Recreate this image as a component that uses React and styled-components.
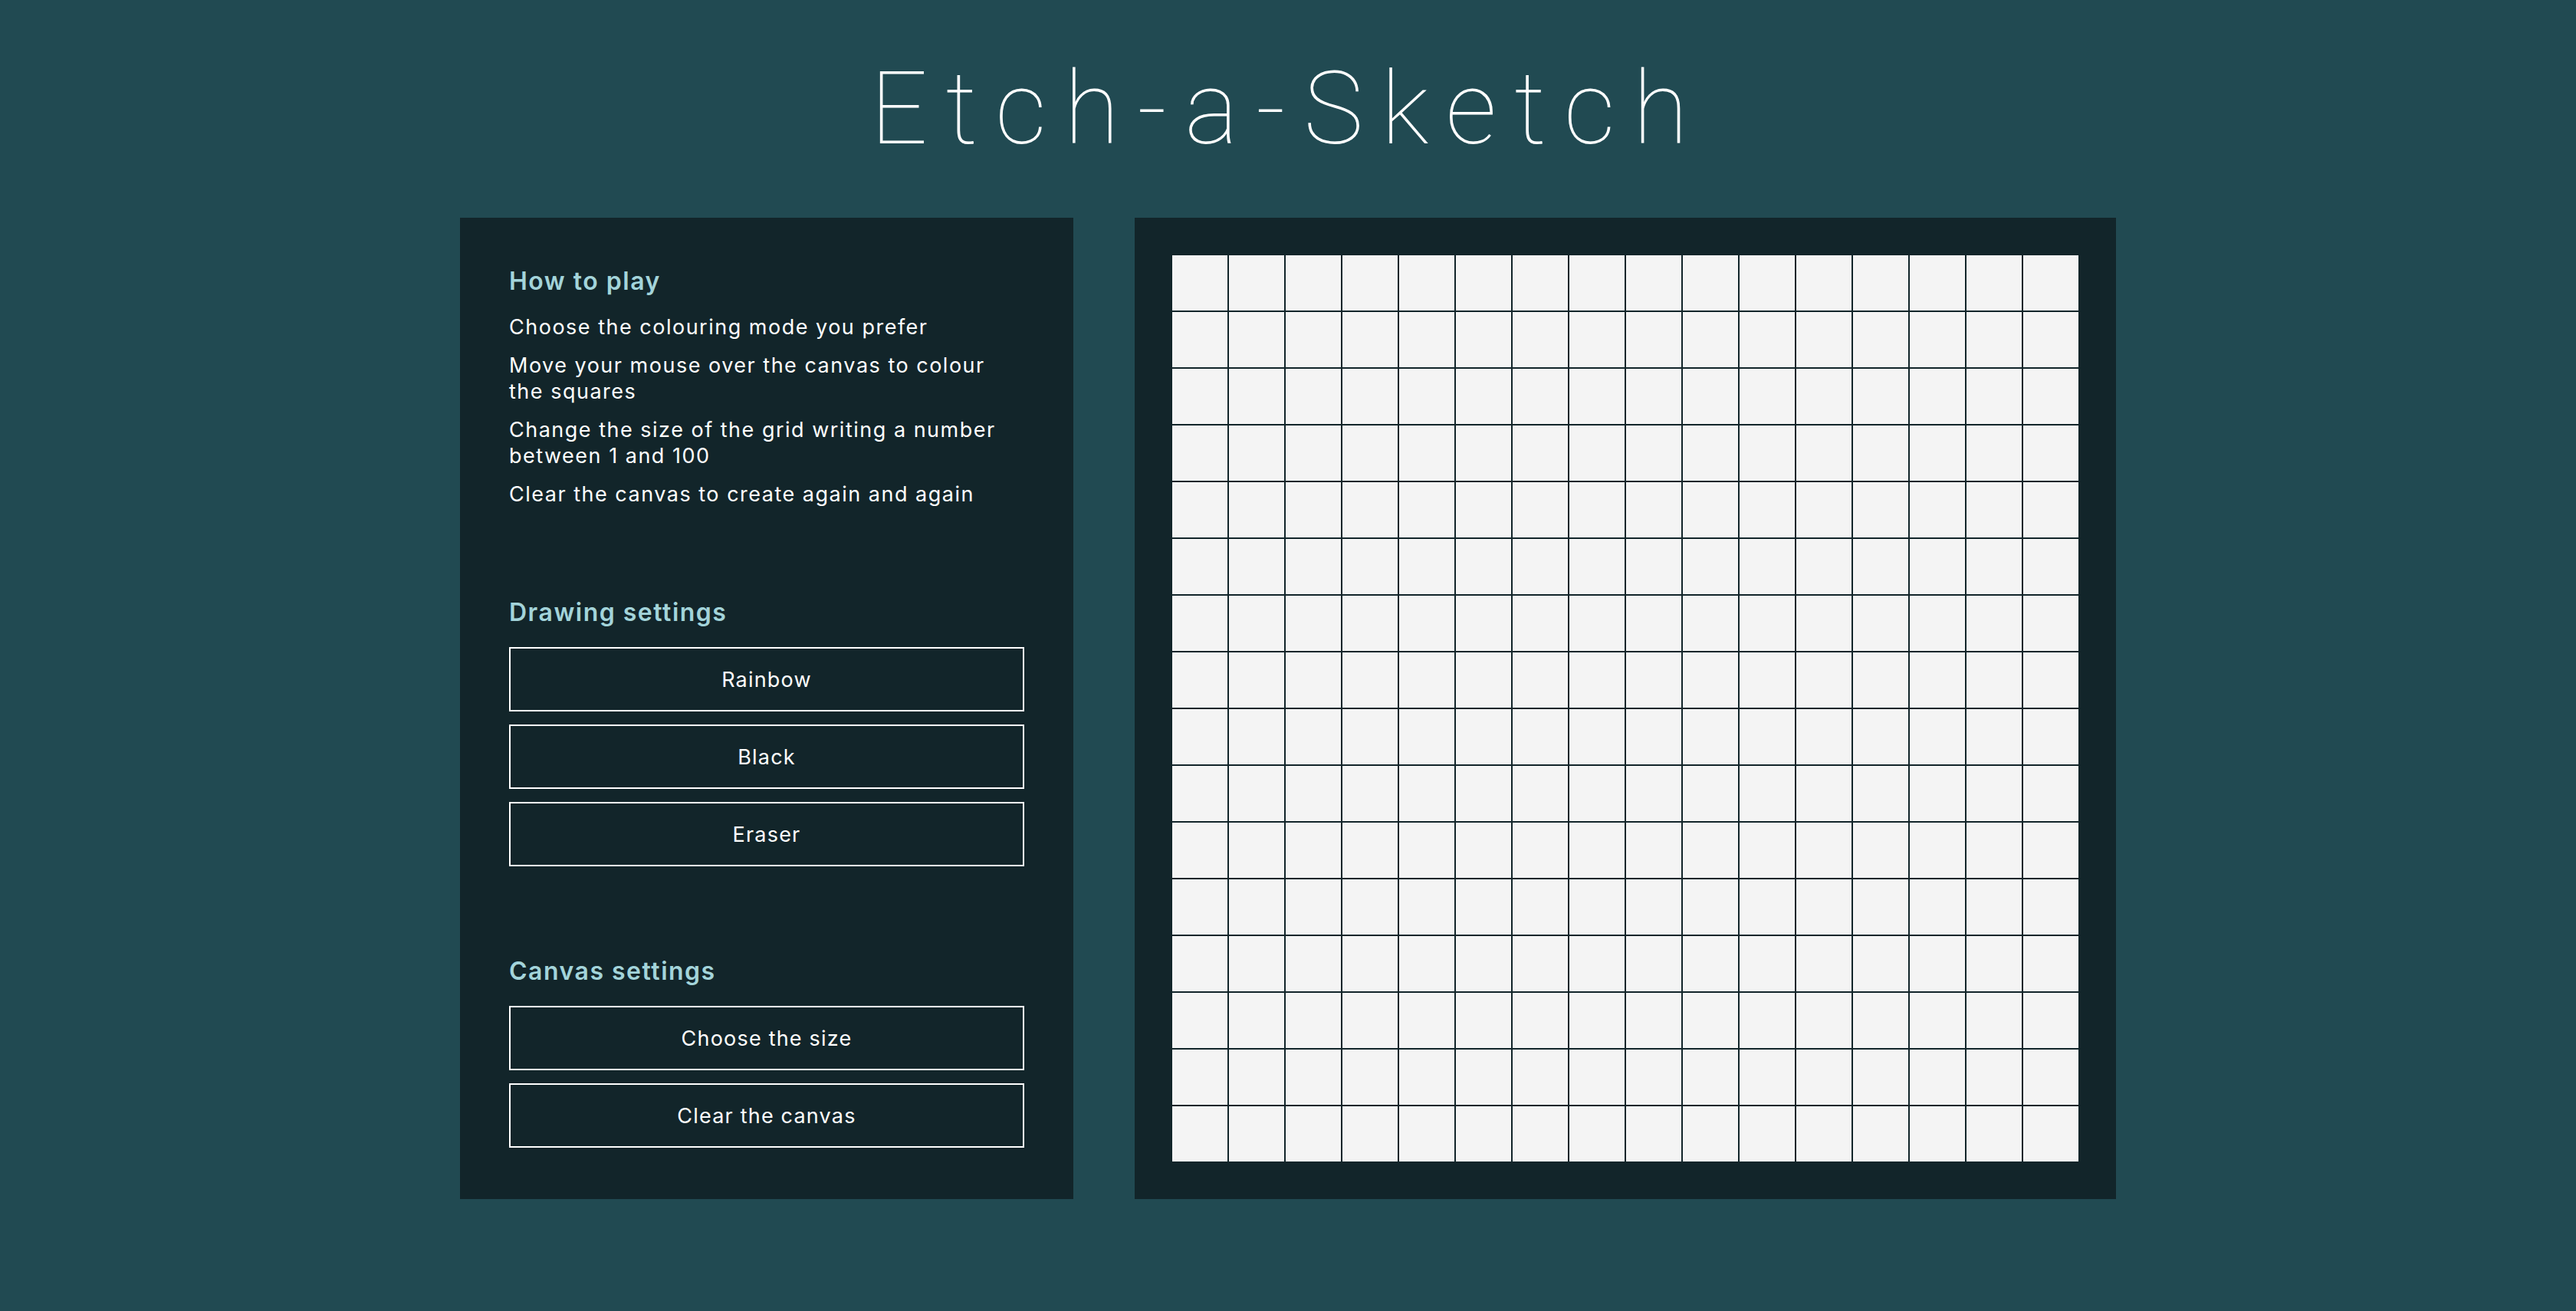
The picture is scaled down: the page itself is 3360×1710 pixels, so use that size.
import React from "react";
import styled, { createGlobalStyle } from "styled-components";

const GRID_SIZE = 16;

const steps = [
  "Choose the colouring mode you prefer",
  "Move your mouse over the canvas to colour the squares",
  "Change the size of the grid writing a number between 1 and 100",
  "Clear the canvas to create again and again",
];

export default function App() {
  const cells = Array.from({ length: GRID_SIZE * GRID_SIZE });
  return (
    <>
      <GlobalStyle />
      <Page>
        <Title>Etch-a-Sketch</Title>
        <Main>
          <Sidebar>
            <Section>
              <Heading>How to play</Heading>
              <Steps>
                {steps.map((s) => (
                  <li key={s}>{s}</li>
                ))}
              </Steps>
            </Section>

            <Section>
              <Heading $gap="26px">Drawing settings</Heading>
              <Buttons>
                <Button>Rainbow</Button>
                <Button>Black</Button>
                <Button>Eraser</Button>
              </Buttons>
            </Section>

            <Section>
              <Heading $gap="26px">Canvas settings</Heading>
              <Buttons>
                <Button>Choose the size</Button>
                <Button>Clear the canvas</Button>
              </Buttons>
            </Section>
          </Sidebar>

          <CanvasPanel>
            <Grid $size={GRID_SIZE}>
              {cells.map((_, i) => (
                <Cell key={i} />
              ))}
            </Grid>
          </CanvasPanel>
        </Main>
      </Page>
    </>
  );
}

// css in js

const GlobalStyle = createGlobalStyle`
  html, body {
    margin: 0;
    padding: 0;
    background-color: #214a52;
  }
  body {
    font-family: "Inter", "Open Sans", "Liberation Sans", sans-serif;
    color: #fff;
  }
`;

const Page = styled.div`
  display: flex;
  flex-direction: column;
  align-items: center;
  min-height: 1710px;
  background-color: #214a52;
`;

const Title = styled.h1`
  margin: 0;
  padding: 76px 0 0 0;
  height: 284px;
  box-sizing: border-box;
  font-family: "Roboto", "Lato", "Liberation Sans", sans-serif;
  font-weight: 100;
  font-size: 132px;
  line-height: 1;
  letter-spacing: 23px;
  color: #fff;
`;

const Main = styled.main`
  display: flex;
  gap: 80px;
  align-items: stretch;
`;

const Sidebar = styled.aside`
  display: flex;
  flex-direction: column;
  gap: 118px;
  width: 800px;
  box-sizing: border-box;
  padding: 64px;
  background-color: #12252a;
`;

const Section = styled.section`
  display: flex;
  flex-direction: column;
`;

const Heading = styled.h2`
  margin: 0 0 ${(props) => props.$gap || "24px"};
  font-size: 32px;
  line-height: 38px;
  font-weight: 600;
  letter-spacing: 1.5px;
  color: #a3d4da;
`;

const Steps = styled.ul`
  list-style: none;
  margin: 0;
  padding: 0;
  display: flex;
  flex-direction: column;
  gap: 16px;
  li {
    font-size: 27px;
    line-height: 34px;
    letter-spacing: 1.5px;
    color: #fff;
  }
`;

const Buttons = styled.div`
  display: flex;
  flex-direction: column;
  gap: 17px;
`;

const Button = styled.button`
  height: 84px;
  width: 100%;
  border: 2px solid #fff;
  background-color: transparent;
  color: #fff;
  font-family: inherit;
  font-size: 27px;
  letter-spacing: 1.2px;
  cursor: pointer;
`;

const CanvasPanel = styled.div`
  width: 1280px;
  height: 1280px;
  box-sizing: border-box;
  padding: 48px;
  background-color: #12252a;
`;

const Grid = styled.div`
  display: grid;
  grid-template-columns: repeat(${(props) => props.$size}, 1fr);
  grid-template-rows: repeat(${(props) => props.$size}, 1fr);
  width: 100%;
  height: 100%;
`;

const Cell = styled.div`
  border: 1px solid #12252a;
  background-color: #f4f4f4;
`;
